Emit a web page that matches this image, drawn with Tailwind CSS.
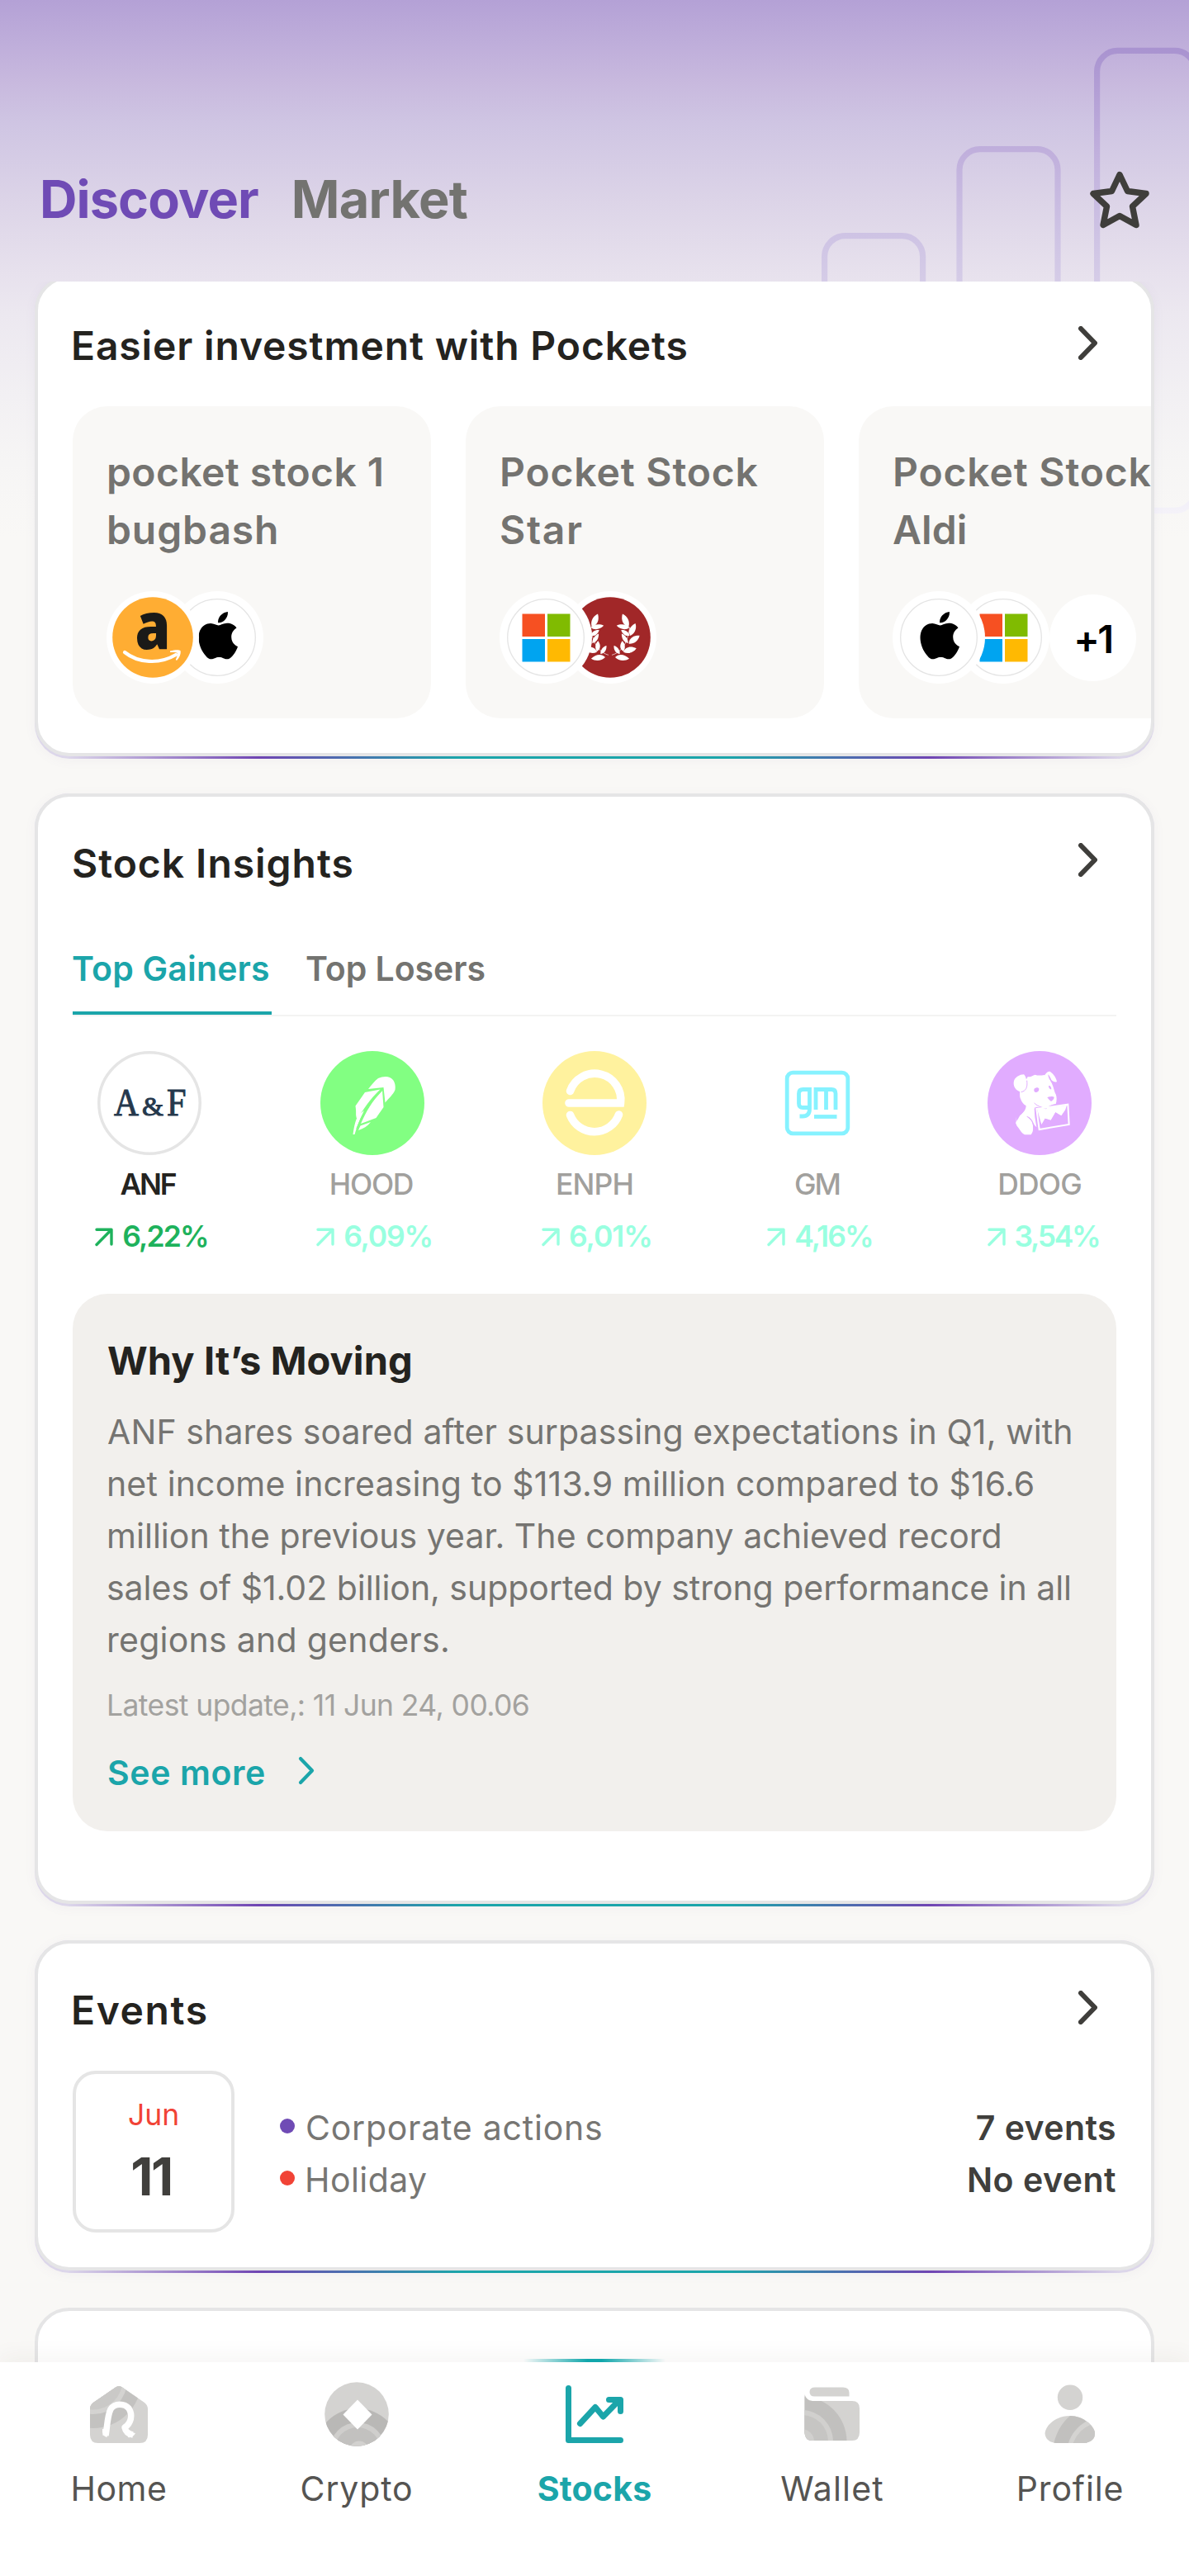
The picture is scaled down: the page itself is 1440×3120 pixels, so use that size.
<!DOCTYPE html>
<html lang="en">
<head>
<meta charset="utf-8">
<title>Stocks – Discover</title>
<script src="https://cdn.jsdelivr.net/npm/@tailwindcss/browser@4"></script>
</head>
<body class="relative flex h-[3120px] w-[1440px] flex-col overflow-hidden bg-[#f9f8f6] font-[Inter,sans-serif]">

<!-- shared icon shapes -->
<svg class="absolute size-0" aria-hidden="true">
  <defs>
    <path id="apple" d="M788.1 340.9c-5.8 4.5-108.2 62.2-108.2 190.5 0 148.4 130.3 200.9 134.2 202.2-.6 3.2-20.7 71.9-68.7 141.9-42.8 61.6-87.5 123.1-155.5 123.1s-85.5-39.5-164-39.5c-76.5 0-103.7 40.8-165.9 40.8s-105.6-57-155.5-127C46.7 790.7 0 663 0 541.8c0-194.4 126.4-297.5 250.8-297.5 66.1 0 121.2 43.4 162.7 43.4 39.5 0 101.1-46 176.3-46 28.5 0 130.9 2.6 198.3 99.2zm-234-181.5c31.1-36.9 53.1-88.1 53.1-139.3 0-7.1-.6-14.3-1.9-20.1-50.6 1.9-110.8 33.7-147.1 75.8-28.5 32.4-55.1 83.6-55.1 135.5 0 7.8 1.3 15.6 1.9 18.1 3.2.6 8.4 1.3 13.6 1.3 45.4 0 102.5-30.4 135.5-71.3z"/>
    <path id="leaf" d="M0 0C-15 -12 -14 -32 2 -49C14 -34 13 -13 0 0Z"/>
    <g id="branch">
      <path d="M426 251C455 243 482 218 491 150" fill="none" stroke="#fff" stroke-width="2"/>
      <use href="#leaf" transform="translate(487 148) rotate(-28) scale(1.05)"/>
      <use href="#leaf" transform="translate(490 151) rotate(-84) scale(.8 .96)"/>
      <use href="#leaf" transform="translate(493 181) rotate(20)"/>
      <use href="#leaf" transform="translate(491 180) rotate(-60) scale(.7 .75)"/>
      <use href="#leaf" transform="translate(488 210) rotate(50)"/>
      <use href="#leaf" transform="translate(485 208) rotate(-36) scale(.7 .85)"/>
      <use href="#leaf" transform="translate(468 240) rotate(72)"/>
      <use href="#leaf" transform="translate(468 238) rotate(-9) scale(.8 .78)"/>
      <use href="#leaf" transform="translate(438 259) rotate(94) scale(1 1.05)"/>
      <use href="#leaf" transform="translate(455 247) rotate(-38) scale(.7 .75)"/>
    </g>
    <g id="windows">
      <path fill="#f65022" d="M0 0h27.5v27.5H0z"/><path fill="#80bb01" d="M30.5 0H58v27.5H30.5z"/>
      <path fill="#00a4f0" d="M0 30.5h27.5V58H0z"/><path fill="#ffb902" d="M30.5 30.5H58V58H30.5z"/>
    </g>
    <path id="up" d="M2 2.2H20V20M19.5 2.7L2 20.5" fill="none" stroke="currentColor" stroke-width="3.4" stroke-linecap="round" stroke-linejoin="round"/>
    <path id="chev" d="M3 3L20 20.5L3 38" fill="none" stroke="currentColor" stroke-width="6" stroke-linecap="round" stroke-linejoin="round"/>
  </defs>
</svg>

<!-- header backdrop -->
<div class="absolute inset-x-0 top-0 h-[660px] bg-[linear-gradient(180deg,#b4a1d6_0px,#c8b9de_100px,#cfc5e3_150px,#ddd5e8_250px,#e7e1ed_330px,#ece8f0_380px,#f2f0f3_480px,#f6f5f5_560px,#f9f8f6_650px)]"></div>
<svg class="absolute left-0 top-0" width="1440" height="660" fill="none" stroke="url(#bars)" stroke-width="7.2">
  <defs>
    <linearGradient id="bars" gradientUnits="userSpaceOnUse" x1="0" y1="58" x2="0" y2="622">
      <stop offset="0" stop-color="#a993d0"/><stop offset=".22" stop-color="#c0afdc"/><stop offset=".4" stop-color="#cec3e4"/><stop offset=".5" stop-color="#d5cce7"/><stop offset="1" stop-color="#f4f2f9"/>
    </linearGradient>
  </defs>
  <rect x="998.6" y="285.6" width="119" height="332.8" rx="25"/>
  <rect x="1162" y="180.6" width="119" height="437.8" rx="25"/>
  <rect x="1328.6" y="61.4" width="119" height="557" rx="25"/>
</svg>

<!-- header -->
<header class="relative flex h-[341px] shrink-0 items-start justify-between pl-12 pr-12 pt-[201px] text-[63px] font-bold leading-[80px]">
  <nav class="flex gap-10">
    <span class="tracking-[-0.94px] text-[#6f4bb5]">Discover</span>
    <span class="tracking-[-0.71px] text-[#737370]">Market</span>
  </nav>
  <svg class="mt-1.5 h-[70px] w-[72px]" viewBox="0 0 72 70" fill="none" stroke="#3f3e3b" stroke-width="7.4" stroke-linejoin="round">
    <path d="M36 4.5L45.5 24.5L68 27.5L51.5 43L56 65.5L36 54.5L16 65.5L20.5 43L4 27.5L26.5 24.5Z"/>
  </svg>
</header>

<main class="relative h-[2520px] shrink-0 overflow-hidden px-[42px]">

  <!-- pockets -->
  <section class="-mt-[7px] rounded-[42px] bg-[linear-gradient(90deg,#dcd6ea_3%,#6f45b3_20%,#1ba5aa_38%,#1ba5aa_62%,#6f45b3_80%,#dcd6ea_97%)] pb-[3px] shadow-[0_2px_14px_rgba(120,100,160,0.06)]">
    <div class="h-[582px] overflow-hidden rounded-[42px] border-4 border-[#e5e5e6] bg-white pl-[42px] pt-[46px]">
      <div class="-ml-[2px] flex h-[70px] items-start justify-between pr-[65px]">
        <h2 class="text-[48px] font-semibold leading-[70px] tracking-[0.86px] text-[#24231f]">Easier investment with Pockets</h2>
        <svg class="mt-[11px] text-[#3f3e3b]" width="23" height="41"><use href="#chev"/></svg>
      </div>
      <div class="mt-[38px] flex gap-[42px]">
        <article class="h-[378px] w-[434px] shrink-0 rounded-[42px] bg-[#f9f8f6] px-[41px] pt-[45px]">
          <h3 class="whitespace-nowrap text-[48px] font-semibold leading-[70px] text-[#747370]"><span class="tracking-[0.42px]">pocket stock 1</span><br><span class="tracking-[0.9px]">bugbash</span></h3>
          <div class="mt-[39px] flex">
            <svg class="relative z-10 overflow-visible" width="112" height="112" viewBox="0 0 112 112">
              <circle cx="56" cy="56" r="56" fill="#fff"/><circle cx="56" cy="56" r="48.8" fill="#ffad33"/>
              <text x="56" y="70" text-anchor="middle" textLength="43" lengthAdjust="spacingAndGlyphs" font-family="Open Sans" font-weight="800" font-size="78" fill="#1a1a18">a</text>
              <path d="M22 74C38 87 64 89 84 77" fill="none" stroke="#fff" stroke-width="4.200" stroke-linecap="round"/>
              <path d="M77 72.500C84 70.500 88 71 89.500 72C90.500 76 88 81 85 84L83.800 83C85.500 79 86.500 76 85.500 74.800C84 74 81 74 77 74Z" fill="#fff"/>
            </svg>
            <svg class="-ml-[34px]" width="112" height="112" viewBox="0 0 112 112">
              <circle cx="56" cy="56" r="56" fill="#fff"/><circle cx="56" cy="56" r="46.300" fill="none" stroke="#e4e4e4" stroke-width="1.300"/>
              <use href="#apple" transform="translate(33.500 25) scale(.0584 .0573)"/>
            </svg>
          </div>
        </article>
        <article class="h-[378px] w-[434px] shrink-0 rounded-[42px] bg-[#f9f8f6] px-[41px] pt-[45px]">
          <h3 class="whitespace-nowrap text-[48px] font-semibold leading-[70px] text-[#747370]"><span class="tracking-[0.84px]">Pocket Stock</span><br><span class="tracking-[1.7px]">Star</span></h3>
          <div class="mt-[39px] flex">
            <svg class="relative z-10" width="112" height="112" viewBox="0 0 112 112">
              <circle cx="56" cy="56" r="56" fill="#fff"/><circle cx="56" cy="56" r="46.300" fill="none" stroke="#e4e4e4" stroke-width="1.300"/>
              <use href="#windows" x="27.500" y="27.500"/>
            </svg>
            <svg class="-ml-[34px]" width="112" height="112" viewBox="0 0 112 112">
              <circle cx="56" cy="56" r="56" fill="#fff"/><circle cx="56" cy="56" r="48.800" fill="#a12728"/>
              <g transform="translate(-84 -6.330) scale(.3333)" fill="#fff">
                <use href="#branch"/><use href="#branch" transform="translate(840 0) scale(-1 1)"/>
              </g>
            </svg>
          </div>
        </article>
        <article class="h-[378px] w-[434px] shrink-0 rounded-[42px] bg-[#f9f8f6] px-[41px] pt-[45px]">
          <h3 class="whitespace-nowrap text-[48px] font-semibold leading-[70px] text-[#747370]"><span class="tracking-[0.84px]">Pocket Stock</span><br><span class="tracking-[0.1px]">Aldi</span></h3>
          <div class="mt-[39px] flex items-center">
            <svg class="relative z-10" width="112" height="112" viewBox="0 0 112 112">
              <circle cx="56" cy="56" r="56" fill="#fff"/><circle cx="56" cy="56" r="46.300" fill="none" stroke="#e4e4e4" stroke-width="1.300"/>
              <use href="#apple" transform="translate(33.500 25) scale(.0584 .0573)"/>
            </svg>
            <svg class="-ml-[34px]" width="112" height="112" viewBox="0 0 112 112">
              <circle cx="56" cy="56" r="56" fill="#fff"/><circle cx="56" cy="56" r="46.300" fill="none" stroke="#e4e4e4" stroke-width="1.300"/>
              <use href="#windows" x="27.500" y="27.500"/>
            </svg>
            <span class="grid size-[105px] place-items-center rounded-full bg-white pt-1 text-[47px] font-semibold leading-[60px] tracking-[-2.6px] text-black">+1</span>
          </div>
        </article>
      </div>
    </div>
  </section>

  <!-- stock insights -->
  <section class="mt-[42px] rounded-[42px] bg-[linear-gradient(90deg,#dcd6ea_3%,#6f45b3_20%,#1ba5aa_38%,#1ba5aa_62%,#6f45b3_80%,#dcd6ea_97%)] pb-[3px] shadow-[0_2px_14px_rgba(120,100,160,0.06)]">
    <div class="h-[1345px] rounded-[42px] border-4 border-[#e5e5e6] bg-white px-[42px] pt-[46px]">
      <div class="-ml-px flex h-[70px] items-start justify-between pr-[23px]">
        <h2 class="text-[48px] font-semibold leading-[70px] tracking-[0.97px] text-[#24231f]">Stock Insights</h2>
        <svg class="mt-[10px] text-[#3f3e3b]" width="23" height="41"><use href="#chev"/></svg>
      </div>
      <div class="mt-[62px] flex h-[88px] gap-[41px] border-b-2 border-[#f3f3f2] text-[41px] font-semibold leading-[60px]">
        <div class="h-[86px] w-[241px] whitespace-nowrap border-b-4 border-[#1ba5aa] text-[#1ba5aa]"><span class="-ml-px tracking-[0.17px]">Top Gainers</span></div>
        <div class="whitespace-nowrap text-[#737370]"><span class="tracking-[-0.06px]">Top Losers</span></div>
      </div>
      <div class="mt-[42px] flex h-[250px] justify-between text-[35.5px] leading-[50px]">
        <div class="flex w-[186px] flex-col items-center">
          <svg width="126" height="126" viewBox="0 0 126 126">
            <circle cx="63" cy="63" r="61.200" fill="#fff" stroke="#e5e5e5" stroke-width="3.500"/>
            <g font-family="Liberation Serif" fill="#25384c" stroke="#25384c" stroke-width="1">
              <text x="20" y="78" font-size="46.500" textLength="30" lengthAdjust="spacingAndGlyphs">A</text>
              <text x="54" y="78" font-size="32" textLength="26" lengthAdjust="spacingAndGlyphs">&amp;</text>
              <text x="84" y="78" font-size="46.500" textLength="23.500" lengthAdjust="spacingAndGlyphs">F</text>
            </g>
          </svg>
          <span class="-ml-1 mt-[11px] font-semibold tracking-[-2.2px] text-[#24231f]">ANF</span>
          <span class="ml-[5px] mt-[13px] flex items-center gap-[11px] font-semibold tracking-[-1.86px] text-[#1eb25c]"><svg width="22" height="23"><use href="#up"/></svg>6,22%</span>
        </div>
        <div class="flex w-[186px] flex-col items-center">
          <svg width="126" height="126" viewBox="0 0 126 126">
            <circle cx="63" cy="63" r="63" fill="#82ff82"/>
            <path fill="#fff" d="M58 46C62 41 66 36 70 33C76 30.500 84 29.500 88 35C91 39 91 44 90.500 47C88 53 83 57 78.500 62.500L76.500 44Z"/>
            <path fill="#fff" d="M54 50L72.500 46.500C60 58 51 72 44.500 83C42 76 44 76 42.500 66.500Z"/>
            <path fill="#fff" d="M75 47.500L76.500 68L67.500 81L49 88C55 74 63 60 75 47.500Z"/>
            <path fill="#fff" d="M39.500 101C41 90 43 81 47 77L53 72C48 82 44 92 41.500 101Z"/>
            <path fill="#fff" d="M46 96L48.500 90.500L61 86C57 91 52 94 46 96Z"/>
            <path d="M44 94C50 77 61 61 76 46" fill="none" stroke="#82ff82" stroke-width="1.400"/>
          </svg>
          <span class="-ml-[2px] mt-[11px] font-medium tracking-[-1.25px] text-[#a1a09d]">HOOD</span>
          <span class="ml-[6px] mt-[13px] flex items-center gap-[11px] font-semibold tracking-[-1.2px] text-[#99ffe0]"><svg width="22" height="23"><use href="#up"/></svg>6,09%</span>
        </div>
        <div class="flex w-[186px] flex-col items-center">
          <svg width="126" height="126" viewBox="0 0 126 126" fill="none" stroke="#fff" stroke-width="9.600" stroke-linecap="round">
            <circle cx="63" cy="63" r="63" fill="#fff29e" stroke="none"/>
            <path d="M33.500 48.500A31.500 31.500 0 0 1 94.500 63H32"/>
            <path d="M33.500 77.500A31.500 31.500 0 0 0 92.500 77"/>
          </svg>
          <span class="mt-[11px] font-medium tracking-[-0.84px] text-[#a1a09d]">ENPH</span>
          <span class="ml-[6px] mt-[13px] flex items-center gap-[11px] font-semibold tracking-[-1px] text-[#99ffe0]"><svg width="22" height="23"><use href="#up"/></svg>6,01%</span>
        </div>
        <div class="flex w-[186px] flex-col items-center">
          <svg width="126" height="126" viewBox="0 0 126 126" fill="none" stroke="#86f2ff" stroke-width="4.800">
            <rect x="26.200" y="26.200" width="73.600" height="73.600" rx="7"/>
            <path d="M53.500 46.500H45.500Q40.500 46.500 40.500 51.500V63.500Q40.500 68.500 45.500 68.500H53.500M53.500 44V70Q53.500 79 45 79H41.500"/>
            <path d="M61 71V46.500H80Q85 46.500 85 51.500V71M73.500 46V71"/>
            <path d="M59 79.500H86.500"/>
          </svg>
          <span class="mt-[11px] font-medium tracking-[-1.94px] text-[#a1a09d]">GM</span>
          <span class="ml-[7px] mt-[13px] flex items-center gap-[11px] font-semibold tracking-[-1.93px] text-[#99ffe0]"><svg width="22" height="23"><use href="#up"/></svg>4,16%</span>
        </div>
        <div class="flex w-[186px] flex-col items-center">
          <svg width="126" height="126" viewBox="20 23 378 378">
            <circle cx="209" cy="212" r="189" fill="#e1acff"/>
            <g fill="#fff">
              <path d="M166 117C176 118 184 112 193 109C202 113 214 112 226 110C233 118 246 126 250 134C260 150 262 170 268 180C272 190 272 204 268 216C258 218 246 222 240 227C230 232 208 226 198 226L190 232L192 262L198 300C186 290 182 268 162 258C156 262 146 270 140 277C128 285 122 292 125 260C140 262 160 240 160 222C150 216 144 208 140 196C136 190 138 176 137 168Z"/>
              <path d="M115 138C116 118 138 108 152 108C160 116 162 128 163 146C166 162 158 170 140 171C124 168 114 154 115 138Z"/>
              <path d="M225 117C230 104 240 94 248 98C262 108 270 122 272 134C266 138 258 134 252 128C248 118 244 112 240 108C240 116 244 124 248 132L238 134Z"/>
              <path d="M160 262C174 266 184 280 185 294C187 310 184 320 178 327H155C146 322 140 314 134 304C126 296 122 288 124 282C132 270 146 260 160 262Z"/>
              <path d="M123 288C122 270 138 264 148 248L160 236L172 262Z"/>
              <path d="M200 234L308 220L302 238L288 258L267 246L250 274L229 268L216 290Z"/>
            </g>
            <g fill="#e1acff">
              <path d="M190 160C196 154 205 154 207 160C208 168 203 172 194 173C188 170 188 164 190 160Z"/>
              <path d="M242 150C246 147 252 152 252 162C247 163 242 158 242 150Z"/>
              <path d="M237 192C244 187 258 186 262 191C262 197 256 203 251 206C246 202 241 197 237 192Z"/>
              <path d="M122 245L146 243L126 278Z"/>
              <path d="M214 302L229 268L250 276L267 246L288 261L303 237L309 286Z"/>
            </g>
            <g fill="none" stroke="#e1acff" stroke-width="3">
              <path d="M163 130C166 155 160 168 142 172"/><path d="M163 261C182 268 188 284 188 312"/><path d="M190 212C204 226 220 228 232 232C246 222 256 218 270 217"/><path d="M193 228L200 290"/>
            </g>
            <path d="M198 233L312 217L316 290L208 308Z" fill="none" stroke="#fff" stroke-width="6"/>
          </svg>
          <span class="mt-[11px] font-medium tracking-[-0.82px] text-[#a1a09d]">DDOG</span>
          <span class="ml-[9px] mt-[13px] flex items-center gap-[11px] font-semibold tracking-[-2.3px] text-[#99ffe0]"><svg width="22" height="23"><use href="#up"/></svg>3,54%</span>
        </div>
      </div>
      <div class="mt-[44px] h-[651px] rounded-[42px] bg-[#f2f0ed] px-[41px] pt-[46px]">
        <h3 class="pl-px text-[47px] font-bold leading-[70px] tracking-[0.07px] text-[#24231f]">Why It’s Moving</h3>
        <p class="mt-5 whitespace-nowrap text-[41px] leading-[63px] text-[#757471]"><span class="ml-px tracking-[0.1px]">ANF shares soared after surpassing expectations in Q1, with</span><br><span class="tracking-[0.14px]">net income increasing to $113.9 million compared to $16.6</span><br><span class="tracking-[0.04px]">million the previous year. The company achieved record</span><br><span class="tracking-[-0.03px]">sales of $1.02 billion, supported by strong performance in all</span><br><span class="tracking-[0.26px]">regions and genders.</span></p>
        <p class="mt-[23px] text-[35.5px] leading-[50px] tracking-[-0.58px] text-[#a3a29f]">Latest update,: 11 Jun 24, 00.06</p>
        <a class="mt-[26px] flex h-[60px] items-start gap-[39px] pl-px text-[41px] font-semibold leading-[60px] tracking-[0.61px] text-[#1ba5aa]">See more
          <svg class="mt-[10px]" width="20" height="35" viewBox="0 0 20 35" fill="none" stroke="currentColor" stroke-width="4.200" stroke-linecap="round" stroke-linejoin="round"><path d="M3 3L17 17.500L3 32"/></svg>
        </a>
      </div>
    </div>
  </section>

  <!-- events -->
  <section class="mt-[41px] rounded-[42px] bg-[linear-gradient(90deg,#dcd6ea_3%,#6f45b3_20%,#1ba5aa_38%,#1ba5aa_62%,#6f45b3_80%,#dcd6ea_97%)] pb-[3px] shadow-[0_2px_14px_rgba(120,100,160,0.06)]">
    <div class="h-[400px] rounded-[42px] border-4 border-[#e5e5e6] bg-white px-[42px] pt-[46px]">
      <div class="-ml-[2px] flex h-[70px] items-start justify-between pr-[23px]">
        <h2 class="text-[48px] font-semibold leading-[70px] tracking-[1.6px] text-[#24231f]">Events</h2>
        <svg class="mt-[11px] text-[#3f3e3b]" width="23" height="41"><use href="#chev"/></svg>
      </div>
      <div class="mt-[38px] flex">
        <div class="flex size-[196px] flex-col items-center rounded-[28px] border-4 border-[#e5e5e5] pt-[25px]">
          <span class="text-[35.5px] leading-[50px] text-[#f14336]">Jun</span>
          <span class="-ml-[6px] mt-[11px] text-[63px] font-bold leading-[76px] tracking-[-2.36px] text-[#403f3c]">11</span>
        </div>
        <ul class="ml-[55px] mt-[38px] flex-1 text-[41px] leading-[63px] text-[#777673]">
          <li class="flex h-[63px] items-center">
            <i class="mb-[5px] mr-[13px] size-[18px] rounded-full bg-[#6f4bb5]"></i><span class="tracking-[0.76px]">Corporate actions</span>
            <b class="ml-auto font-semibold tracking-[0.43px] text-[#403f3c]">7 events</b>
          </li>
          <li class="flex h-[63px] items-center">
            <i class="mb-[5px] mr-[12px] size-[18px] rounded-full bg-[#f14336]"></i><span class="tracking-[0.43px]">Holiday</span>
            <b class="ml-auto font-semibold tracking-[0.5px] text-[#403f3c]">No event</b>
          </li>
        </ul>
      </div>
    </div>
  </section>

  <!-- next card, scrolled under the tab bar -->
  <section class="mt-[42px] h-[300px] rounded-[42px] border-4 border-[#e5e5e6] bg-white"></section>
</main>

<!-- tab bar -->
<nav class="relative grid h-[259px] shrink-0 grid-cols-5 bg-white pt-[23px] text-[41px] leading-[60px] text-[#555452] shadow-[0_-4px_28px_rgba(60,50,40,0.06)]">
  <div class="absolute -top-1 left-[634px] h-1 w-[172px] bg-[linear-gradient(90deg,transparent,#10a6ab_45%,#10a6ab_55%,transparent)]"></div>
  <a class="flex flex-col items-center gap-5">
    <svg width="80" height="80" viewBox="104 2884 80 80">
      <clipPath id="house"><path d="M140 2891.500Q144 2888.500 148 2891.500L175 2910Q179 2913 179 2918V2949Q179 2959 169 2959H119Q109 2959 109 2949V2918Q109 2913 113 2910Z"/></clipPath>
      <g clip-path="url(#house)">
        <path fill="#d4d3d1" d="M100 2880h90v90h-90z"/>
        <circle cx="113" cy="2883" r="58" fill="#c3c2c0"/>
        <circle cx="113" cy="2883" r="41" fill="#d4d3d1"/>
        <circle cx="113" cy="2883" r="35.500" fill="#cac9c7"/>
      </g>
      <path d="M128 2950C130 2938 130 2926 134 2918C139 2910 151 2911 156 2917C161 2925 159 2935 151 2940C152 2945 155 2948 161 2949" fill="none" stroke="#fff" stroke-width="7.500" stroke-linejoin="round"/>
      <path d="M124 2942L132 2941L129.500 2952Q123 2950 124 2942ZM154 2945L164 2947Q161 2953 155 2952Z" fill="#fff"/>
    </svg>
    <span class="tracking-[0.48px]">Home</span>
  </a>
  <a class="flex flex-col items-center gap-5">
    <svg width="80" height="80" viewBox="0 0 80 80">
      <clipPath id="coin"><circle cx="40" cy="40" r="38.800"/></clipPath>
      <g clip-path="url(#coin)">
        <path fill="#d4d3d1" d="M0 0h80v80H0z"/>
        <circle cx="41" cy="84" r="51" fill="#b9b8b6"/>
        <circle cx="41" cy="84" r="34" fill="#cfcecc"/>
        <circle cx="41" cy="84" r="28" fill="#c2c1bf"/>
        <circle cx="43" cy="84" r="11.500" fill="#d2d1cf"/>
      </g>
      <path d="M41 22.500L58.500 40.500L41 58.500L23.500 40.500Z" fill="#fff"/>
    </svg>
    <span class="tracking-[0.84px]">Crypto</span>
  </a>
  <a class="flex flex-col items-center gap-5 font-bold text-[#1ba5aa]">
    <svg width="80" height="80" viewBox="0 0 80 80" fill="none" stroke="#1ba5aa" stroke-width="7" stroke-linecap="round" stroke-linejoin="round">
      <path d="M8.500 8.500V71.500H71.500"/><path d="M22.500 51.500L41 31.500L50.500 43L69 24"/><path d="M57.500 22.500H71.500V36.500"/>
    </svg>
    <span class="tracking-[0.18px]">Stocks</span>
  </a>
  <a class="flex flex-col items-center gap-5">
    <svg width="80" height="80" viewBox="968 2884 80 80">
      <clipPath id="purse"><path d="M974.500 2900Q977 2908 984 2908H1032Q1041 2908 1041 2917V2946Q1041 2956 1032 2956H984.500Q974.500 2956 974.500 2946Z"/></clipPath>
      <path d="M987 2891.500H1021Q1028.500 2891.500 1028.500 2898V2902.500H986.500Q980.500 2902.500 980.500 2897Q980.500 2891.500 987 2891.500Z" fill="#d4d3d1"/>
      <g clip-path="url(#purse)">
        <path fill="#d4d3d1" d="M970 2890h80v80h-80z"/>
        <circle cx="971" cy="2957" r="54.500" fill="#c1c0be"/>
        <circle cx="971" cy="2957" r="38" fill="#d1d0ce"/>
        <circle cx="971" cy="2957" r="32" fill="#c6c5c3"/>
        <circle cx="971" cy="2957" r="15" fill="#d1d0ce"/>
      </g>
    </svg>
    <span class="tracking-[1.2px]">Wallet</span>
  </a>
  <a class="flex flex-col items-center gap-5">
    <svg width="80" height="80" viewBox="1256 2884 80 80">
      <clipPath id="torso"><path d="M1280 2959Q1266 2958 1265.500 2947C1267 2936 1280 2926 1296 2926C1312 2926 1325 2938 1326 2947Q1326 2957 1313 2959Z"/></clipPath>
      <circle cx="1296" cy="2903.800" r="15.200" fill="#d4d3d1"/>
      <g clip-path="url(#torso)">
        <path fill="#d4d3d1" d="M1260 2920h70v45h-70z"/>
        <circle cx="1336" cy="2972" r="61" fill="#c1c0be"/>
        <circle cx="1336" cy="2972" r="44" fill="#d4d3d1"/>
        <circle cx="1336" cy="2972" r="38.500" fill="#c8c7c5"/>
      </g>
    </svg>
    <span class="tracking-[0.86px]">Profile</span>
  </a>
</nav>
</body>
</html>
